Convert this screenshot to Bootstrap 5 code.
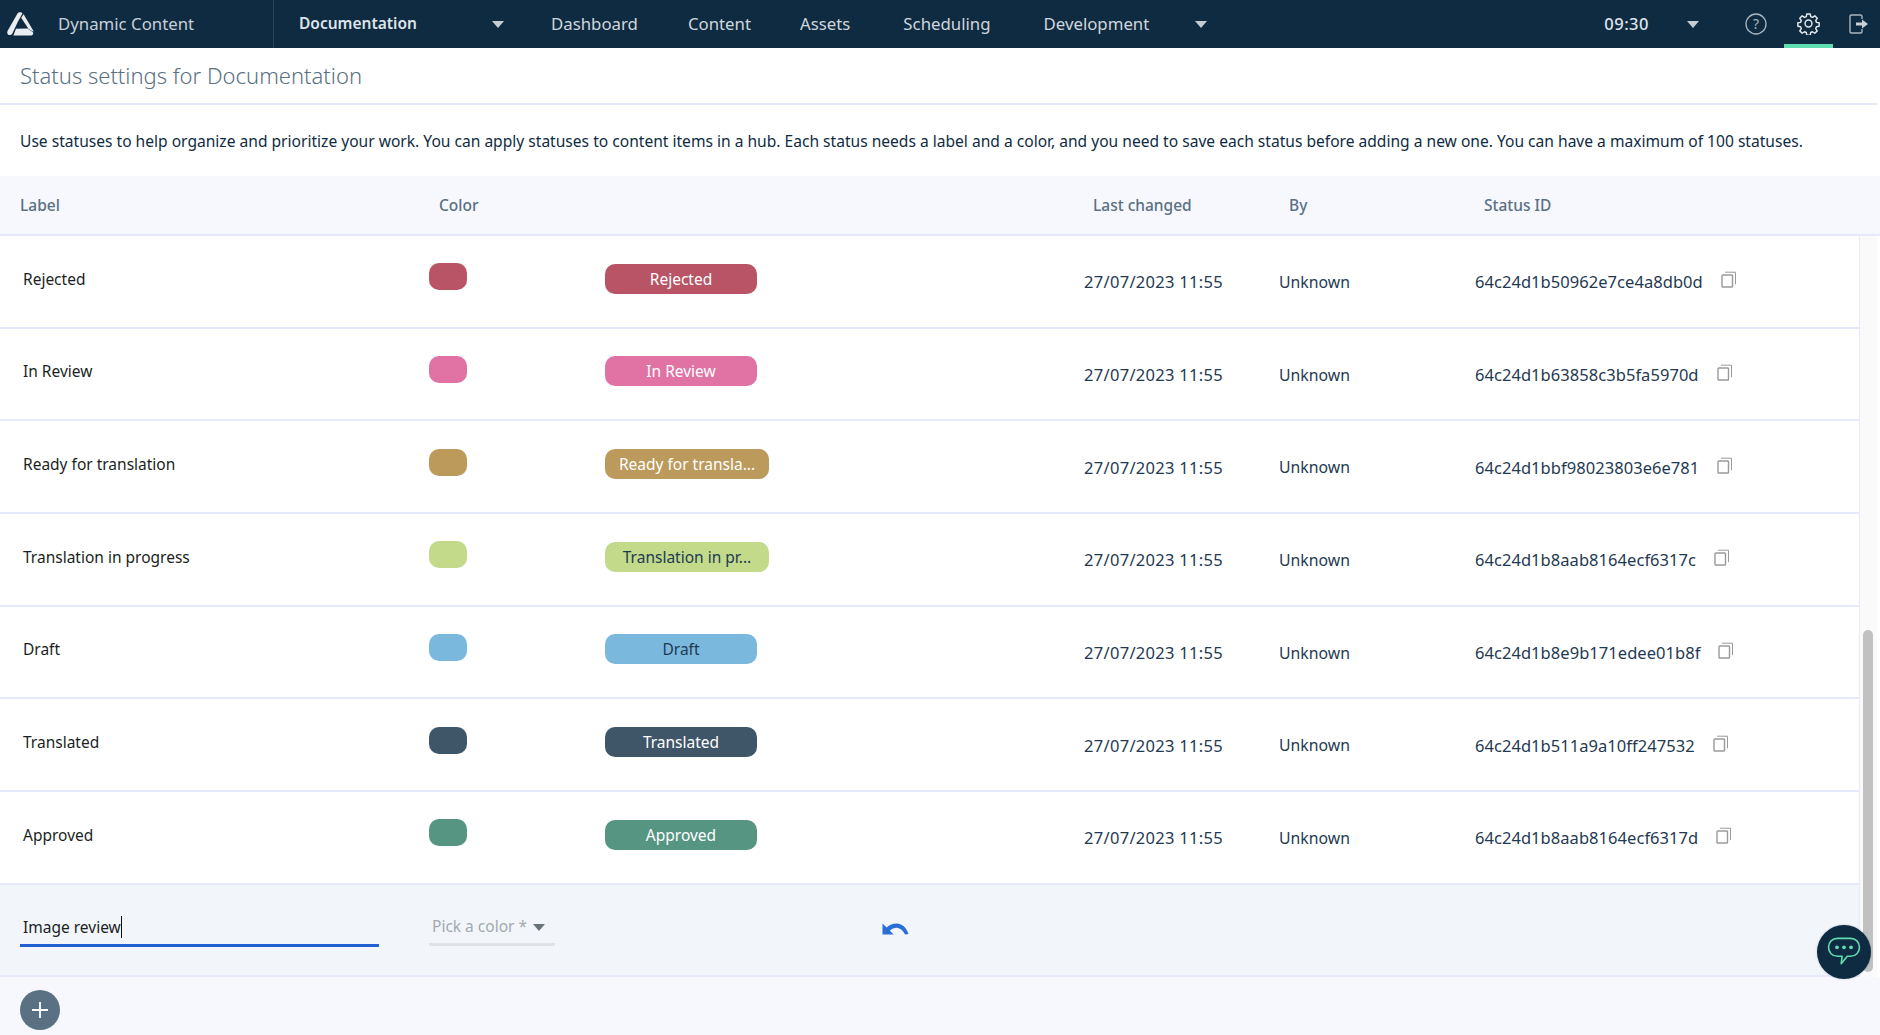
<!doctype html>
<html lang="en"><head><meta charset="utf-8">
<title>Status settings</title>
<link href="https://cdn.jsdelivr.net/npm/bootstrap@5.3.0/dist/css/bootstrap.min.css" rel="stylesheet">
<style>
html,body{height:100%;overflow:hidden}
body{font-family:"Noto Sans",sans-serif;font-size:15.5px;color:#0f2b42;background:#fff}
.topbar{height:48px;background:#0f2b42;color:#d5dbe0;font-size:16.8px;flex:none}
.brand-cell{width:274px;height:48px;border-right:1px solid #2d4459;padding-left:7px;flex:none}
.brand-name{margin-left:24px;color:#c8d0d7}
.doc-menu{margin-left:25px;width:205px;font-weight:600;font-size:15.5px;color:#dfe4e8;flex:none}
.nav-txt{color:#cfd6dc;margin-left:50px}
.nav-first{margin-left:47px}
.nav-a{margin-left:49px}
.nav-w{margin-left:53px}
.caret-d{display:inline-block;width:0;height:0;border-left:6.5px solid transparent;border-right:6.5px solid transparent;border-top:7px solid #c5cdd4}
.caret-dev{margin-left:46px}
.caret-time{margin-left:38px}
.clock{font-size:16.5px;letter-spacing:.5px;color:#dfe4e8}
.ic-help{margin-left:46px}
.tab-active{width:49px;height:48px;border-bottom:4px solid #5fdcb0;padding-top:12px;margin-left:17px}
.ic-exit{margin-left:16px;margin-right:11px}
.pagehead{height:57px;border-bottom:2px solid #e5e9fa;padding-left:20px;padding-top:11px;font-size:22px;font-weight:300;color:#5a7083;margin-right:3px;flex:none}
.intro{height:71px;padding:2px 0 0 20px;font-size:15.58px;color:#0f2b42;flex:none}
.headrow{height:60px;padding-top:1px;background:#f6f8fd;border-bottom:2px solid #e5e9fa;display:grid;grid-template-columns:439px 654px 196px 195px 1fr;font-weight:500;color:#5a7083;flex:none;font-size:15.5px;align-items:center}
.headrow>div:first-child{padding-left:20px}
.rows-wrap{flex:none}
.rows-col{width:1860px;border-right:1px solid #e8ebf3;flex:none}
.track{flex:1 1 auto;background:#fafafa;padding:394px 4px 0 3px;margin-right:3px}
.thumb{height:342px;background:#c1c1c1;border-radius:5px;width:10px}
.stat-row{height:92.67px;display:grid;grid-template-columns:429px 176px 479px 195px 196px 1fr;align-items:center;border-bottom:2px solid #e5e9fa}
.lbl{padding-left:23px;margin-bottom:4px;color:#1b1f23;font-size:15.5px}
.swatch{width:38px;height:27px;border-radius:10px;margin-bottom:9px}
.pill-cell{display:flex}
.pill-x{min-width:152px;height:30px;border-radius:10px;line-height:30px;text-align:center;padding:0 13px;margin-bottom:5px;color:#fff;font-size:15.5px;white-space:nowrap}
.pill-x.wide{width:164px}
.dt{font-size:16.5px;letter-spacing:.3px;color:#1f3a52;margin-top:3px}
.byx{font-size:15.8px;color:#1f3a52;margin-top:3px}
.idcell{grid-column:6;display:flex;align-items:center;font-size:16.5px;letter-spacing:.05px;color:#1f3a52;margin-top:3px}
.copy-ic{width:16px;height:17px;margin-left:18px;margin-bottom:6px;flex:none}
.c-rej{background:#b85466}.c-rev{background:#e072a4}.c-rdy{background:#bc9a5c}.c-trp{background:#c2da8a}.c-drf{background:#7ab8de}.c-trd{background:#3e5668}.c-app{background:#559582}
.t-dark{color:#1f3a52}
.edit-row{height:92.67px;background:#f2f6fb;border-bottom:2px solid #e5e9fa;display:flex;align-items:flex-start}
.name-edit{margin-left:20px;width:359px;height:62px;padding:31px 0 0 3px;border-bottom:3px solid #2060d0;font-size:15.5px;color:#1b1f23;line-height:22px;flex:none}
.text-cur{border-right:1px solid #111}
.pick{margin-left:50px;width:126px;height:61px;padding:30px 0 0 3px;border-bottom:3px solid #e0e3e6;color:#a4a9ae;font-size:15.5px;line-height:22px;flex:none}
.caret-s{display:inline-block;width:0;height:0;border-left:6.5px solid transparent;border-right:6.5px solid transparent;border-top:7px solid #6a7279;margin-left:6px;vertical-align:1px}
.undo-ic{margin-left:327px;margin-top:38px;flex:none}
.foot{flex:1 1 auto;background:#f6f8fd;padding:13px 0 0 20px}
.add-x{width:40px;height:40px;border-radius:50%;background:#5a7083;border:0;padding:0}
.chat-x{position:absolute;left:1817px;top:925px;width:54px;height:54px;border-radius:50%;background:#0f2b42;border:0;padding:0;box-shadow:0 0 2px rgba(15,43,66,.3)}
</style></head>
<body class="d-flex flex-column position-relative">
<nav class="topbar d-flex align-items-center">
  <div class="brand-cell d-flex align-items-center">
    <svg width="27" height="24" viewBox="0 0 27 24" aria-label="logo"><g fill="#e9edf0"><path d="M10.500 1.500C11.400.2 14 -.2 15.500 1.200L11 9.500 5.200 21.800C3.600 24 .2 23.200 .2 20.500c0-.7.3-1.300.6-1.900z"/><path d="M16.600 2.200l9.700 16.600c.2.400.2.700 0 1l-4.700-2.800-7.400-11.200z"/><path d="M9 16.800l11.500-.3 5.500 3.800c.8 1.600-.5 3.300-2 3.300H6.400z"/></g></svg>
    <span class="brand-name">Dynamic Content</span>
  </div>
  <div class="doc-menu d-flex justify-content-between align-items-center"><span>Documentation</span><i class="caret-d"></i></div>
  <span class="nav-txt nav-first">Dashboard</span>
  <span class="nav-txt">Content</span>
  <span class="nav-txt nav-a">Assets</span>
  <span class="nav-txt nav-w">Scheduling</span>
  <span class="nav-txt nav-w">Development</span>
  <i class="caret-d caret-dev"></i>
  <span class="ms-auto fw-medium clock">09:30</span>
  <i class="caret-d caret-time"></i>
  <svg class="ic-help" width="22" height="22" viewBox="0 0 22 22" fill="none" stroke="#a9b5bf" stroke-width="1.3"><circle cx="11" cy="11" r="10"/><text x="11" y="16" font-size="14" text-anchor="middle" fill="#a9b5bf" stroke="none" font-family="Noto Sans">?</text></svg>
  <div class="tab-active d-flex justify-content-center">
    <svg width="23" height="23" viewBox="0 0 24 24" fill="none" stroke="#e6eaed" stroke-width="1.5" stroke-linejoin="round"><circle cx="12" cy="12" r="3.6"/><path d="M10.200 2h3.600l.5 2.800 1.900.8 2.400-1.600 2.500 2.500-1.600 2.400.8 1.900 2.800.5v3.600l-2.800.5-.8 1.900 1.600 2.400-2.500 2.500-2.400-1.600-1.900.8-.5 2.800h-3.600l-.5-2.800-1.900-.8-2.400 1.600-2.500-2.500 1.600-2.400-.8-1.900-2.800-.5v-3.600l2.800-.5.8-1.900-1.600-2.400 2.500-2.500 2.400 1.600 1.900-.8z"/></svg>
  </div>
  <svg class="ic-exit" width="20" height="20" viewBox="0 0 20 20" fill="none" stroke="#a9b5bf" stroke-width="1.4"><path d="M13 5V2.500A1.500 1.500 0 0 0 11.500 1H2.500A1.500 1.500 0 0 0 1 2.500v15A1.500 1.500 0 0 0 2.500 19h9a1.500 1.500 0 0 0 1.500-1.500V15"/><path d="M7 8.500h6V5.500l6 4.500-6 4.500v-3H7z" fill="#c9d1d8" stroke="none"/></svg>
</nav>

<div class="pagehead">Status settings for Documentation</div>
<div class="intro d-flex align-items-center">Use statuses to help organize and prioritize your work. You can apply statuses to content items in a hub. Each status needs a label and a color, and you need to save each status before adding a new one. You can have a maximum of 100 statuses.</div>
<div class="headrow"><div>Label</div><div>Color</div><div>Last changed</div><div>By</div><div>Status ID</div></div>

<div class="rows-wrap d-flex">
  <div class="rows-col">
    <div class="stat-row"><div class="lbl">Rejected</div><div class="swatch c-rej"></div><div class="pill-cell"><span class="pill-x c-rej">Rejected</span></div><div class="dt">27/07/2023 11:55</div><div class="byx">Unknown</div><div class="idcell">64c24d1b50962e7ce4a8db0d<svg class="copy-ic" viewBox="0 0 16 17" fill="none" stroke="#9a9a9a" stroke-width="1.4"><rect x="1" y="4" width="10.5" height="12" rx=".8"/><path d="M4 1.200h10.500v12" stroke-width="1"/></svg></div></div>
    <div class="stat-row"><div class="lbl">In Review</div><div class="swatch c-rev"></div><div class="pill-cell"><span class="pill-x c-rev">In Review</span></div><div class="dt">27/07/2023 11:55</div><div class="byx">Unknown</div><div class="idcell">64c24d1b63858c3b5fa5970d<svg class="copy-ic" viewBox="0 0 16 17" fill="none" stroke="#9a9a9a" stroke-width="1.4"><rect x="1" y="4" width="10.5" height="12" rx=".8"/><path d="M4 1.200h10.500v12" stroke-width="1"/></svg></div></div>
    <div class="stat-row"><div class="lbl">Ready for translation</div><div class="swatch c-rdy"></div><div class="pill-cell"><span class="pill-x wide c-rdy">Ready for transla...</span></div><div class="dt">27/07/2023 11:55</div><div class="byx">Unknown</div><div class="idcell">64c24d1bbf98023803e6e781<svg class="copy-ic" viewBox="0 0 16 17" fill="none" stroke="#9a9a9a" stroke-width="1.4"><rect x="1" y="4" width="10.5" height="12" rx=".8"/><path d="M4 1.200h10.500v12" stroke-width="1"/></svg></div></div>
    <div class="stat-row"><div class="lbl">Translation in progress</div><div class="swatch c-trp"></div><div class="pill-cell"><span class="pill-x wide c-trp t-dark">Translation in pr...</span></div><div class="dt">27/07/2023 11:55</div><div class="byx">Unknown</div><div class="idcell">64c24d1b8aab8164ecf6317c<svg class="copy-ic" viewBox="0 0 16 17" fill="none" stroke="#9a9a9a" stroke-width="1.4"><rect x="1" y="4" width="10.5" height="12" rx=".8"/><path d="M4 1.200h10.500v12" stroke-width="1"/></svg></div></div>
    <div class="stat-row"><div class="lbl">Draft</div><div class="swatch c-drf"></div><div class="pill-cell"><span class="pill-x c-drf t-dark">Draft</span></div><div class="dt">27/07/2023 11:55</div><div class="byx">Unknown</div><div class="idcell">64c24d1b8e9b171edee01b8f<svg class="copy-ic" viewBox="0 0 16 17" fill="none" stroke="#9a9a9a" stroke-width="1.4"><rect x="1" y="4" width="10.5" height="12" rx=".8"/><path d="M4 1.200h10.500v12" stroke-width="1"/></svg></div></div>
    <div class="stat-row"><div class="lbl">Translated</div><div class="swatch c-trd"></div><div class="pill-cell"><span class="pill-x c-trd">Translated</span></div><div class="dt">27/07/2023 11:55</div><div class="byx">Unknown</div><div class="idcell">64c24d1b511a9a10ff247532<svg class="copy-ic" viewBox="0 0 16 17" fill="none" stroke="#9a9a9a" stroke-width="1.4"><rect x="1" y="4" width="10.5" height="12" rx=".8"/><path d="M4 1.200h10.500v12" stroke-width="1"/></svg></div></div>
    <div class="stat-row"><div class="lbl">Approved</div><div class="swatch c-app"></div><div class="pill-cell"><span class="pill-x c-app">Approved</span></div><div class="dt">27/07/2023 11:55</div><div class="byx">Unknown</div><div class="idcell">64c24d1b8aab8164ecf6317d<svg class="copy-ic" viewBox="0 0 16 17" fill="none" stroke="#9a9a9a" stroke-width="1.4"><rect x="1" y="4" width="10.5" height="12" rx=".8"/><path d="M4 1.200h10.500v12" stroke-width="1"/></svg></div></div>
    <div class="edit-row">
      <div class="name-edit"><span class="text-cur">Image review</span></div>
      <div class="pick">Pick a color *<i class="caret-s"></i></div>
      <svg class="undo-ic" width="27" height="13" viewBox="0 0 27 13"><path d="M.5.5v11h11L7.800 7.600C10 5.800 12.500 4.600 15 4.800c3.400.4 6 2.800 8 6.700l3.500-.5C24.600 4.600 19.800.5 14.600.5c-4 0-7.200 1.500-10 4z" fill="#2a6fd6"/></svg>
    </div>
  </div>
  <div class="track"><div class="thumb"></div></div>
</div>

<div class="foot"><button class="add-x d-flex align-items-center justify-content-center" aria-label="Add"><svg width="18" height="18" viewBox="0 0 18 18"><path d="M9 1v16M1 9h16" stroke="#fff" stroke-width="1.8" fill="none"/></svg></button></div>

<button class="chat-x d-flex align-items-center justify-content-center" aria-label="Chat"><svg width="34" height="30" viewBox="0 0 36 32" fill="none" stroke="#5fdcb0" stroke-width="1.7"><path d="M11 1.500h14c5.500 0 9.500 4 9.500 9.500s-4 9.500-9.500 9.500h-3.500l-6.500 8 1-8H11C5.500 20.500 1.500 16.500 1.500 11S5.500 1.500 11 1.500z" stroke-linejoin="round"/><g fill="#5fdcb0" stroke="none"><circle cx="10.500" cy="11" r="2"/><circle cx="18" cy="11" r="2"/><circle cx="25.500" cy="11" r="2"/></g></svg></button>
<script src="https://cdn.jsdelivr.net/npm/bootstrap@5.3.0/dist/js/bootstrap.bundle.min.js"></script>
</body></html>
